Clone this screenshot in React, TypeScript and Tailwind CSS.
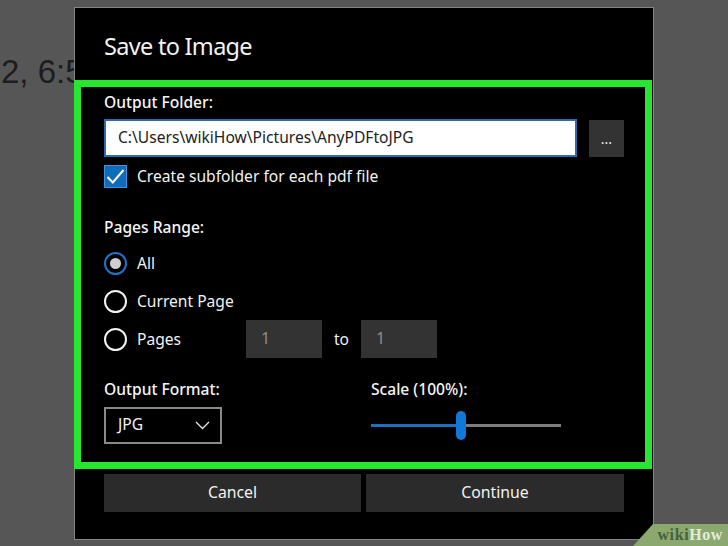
const rowText = 'text-[15.6px] leading-[22px] text-[#f2f2f2]';
const labelText = 'text-[15.6px] leading-[22px] font-medium text-[#f5f5f5]';

function Radio({ checked, label }: { checked?: boolean; label: string }) {
  return (
    <div className="flex items-center gap-[10px] w-[142px] h-[38px]">
      {checked ? (
        <div className="w-[23px] h-[23px] rounded-full border-2 border-[#1f74c4] flex items-center justify-center">
          <div className="w-[11px] h-[11px] rounded-full bg-[#cfcfcf]" />
        </div>
      ) : (
        <div className="w-[23px] h-[23px] rounded-full border-2 border-[#f2f2f2]" />
      )}
      <span className={rowText}>{label}</span>
    </div>
  );
}

function PageInput() {
  return (
    <div className="w-[76px] h-[38px] bg-[#333333] pl-[15px] pb-[2px] flex items-center text-[16px] text-[#8c8c8c]">1</div>
  );
}

export default function App() {
  return (
    <div className="relative w-[728px] h-[546px] overflow-hidden bg-[#565656] pt-[7px] pl-[74px] font-['Noto_Sans',sans-serif]">
      {/* text of the window behind the dialog */}
      <div className="absolute left-[1px] top-[52px] text-[33px] leading-[40px] text-[#1d1d1d] font-['Liberation_Sans',sans-serif]">2, 6:5</div>

      <div className="relative w-[580px] h-[533px] border border-[#858585] bg-black flex flex-col">
        <div className="h-[72px] shrink-0 pl-[29px] pt-[22px] text-[23.5px] leading-[32px] tracking-[-0.7px] text-[#f2f2f2]">Save to Image</div>

        <div className="-ml-px w-[578px] h-[389px] shrink-0 border-[7px] border-[#27e62f] pl-[23px] pr-[21px] pt-[4px]">
          <div className={labelText}>Output Folder:</div>
          <div className="flex gap-[12px] mt-[6px]">
            <div className="w-[473px] h-[38px] bg-white border-2 border-[#2a6cb0] pl-[12px] flex items-center text-[15.6px] text-[#222222]">
              C:\Users\wikiHow\Pictures\AnyPDFtoJPG
            </div>
            <div className="w-[35px] h-[37px] mt-px bg-[#333333] flex items-center justify-center text-[14px] leading-none text-[#eeeeee]">
              ...
            </div>
          </div>
          <div className="flex items-center gap-[10px] h-[23px] mt-[8px]">
            <div className="w-[23px] h-[23px] bg-[#0f6cbd] border border-[#3f93dc] flex items-center justify-center">
              <svg width="19" height="17" viewBox="0 0 19 17" fill="none">
                <path d="M1.5 9 L6.8 14.5 L17.5 2" stroke="#ffffff" strokeWidth="2" />
              </svg>
            </div>
            <span className={`${rowText} pb-[2px]`}>Create subfolder for each pdf file</span>
          </div>

          <div className={`${labelText} mt-[28px]`}>Pages Range:</div>
          <div className="mt-[6px]">
            <Radio checked label="All" />
            <Radio label="Current Page" />
            <div className="flex items-center">
              <Radio label="Pages" />
              <PageInput />
              <span className={`${rowText} w-[39px] text-center`}>to</span>
              <PageInput />
            </div>
          </div>

          <div className="flex mt-[20px]">
            <div className="w-[267px]">
              <div className={labelText}>Output Format:</div>
              <div className="w-[118px] h-[37px] mt-[7px] border-2 border-[#8a8a8a] pl-[12px] pr-[10px] flex items-center justify-between text-[15.6px] text-[#f2f2f2]">
                <span className="pb-px">JPG</span>
                <svg width="15" height="9" viewBox="0 0 15 9" fill="none">
                  <path d="M1 1 L7.5 7.5 L14 1" stroke="#e8e8e8" strokeWidth="1.3" />
                </svg>
              </div>
            </div>
            <div className="w-[190px]">
              <div className={labelText}>Scale (100%):</div>
              <div className="flex items-center h-[30px] mt-[10px]">
                <div className="w-[85px] h-[3px] bg-[#1f6fc0]" />
                <div className="w-[10px] h-[29px] rounded-full bg-[#0f78d8]" />
                <div className="w-[95px] h-[3px] bg-[#7d7d7d]" />
              </div>
            </div>
          </div>
        </div>

        <div className="flex gap-[5px] pl-[29px] mt-[5px]">
          <div className="w-[257px] h-[38px] bg-[#2b2b2b] flex items-center justify-center pb-px text-[15.8px] text-[#f2f2f2]">Cancel</div>
          <div className="w-[258px] h-[38px] bg-[#2b2b2b] flex items-center justify-center pb-px text-[15.8px] text-[#f2f2f2]">Continue</div>
        </div>
      </div>

      {/* watermark */}
      <div className="absolute right-0 bottom-0 w-[95px] h-[22px] bg-[#8ba96f] [clip-path:polygon(20px_0,100%_0,100%_100%,0_100%)] flex items-center justify-end pr-[5px] font-['Liberation_Serif',serif] font-bold text-[16px] leading-none tracking-[0.6px]">
        <span className="text-[#46603f]">wiki</span>
        <span className="text-[#e4ebdc]">How</span>
      </div>
    </div>
  );
}
